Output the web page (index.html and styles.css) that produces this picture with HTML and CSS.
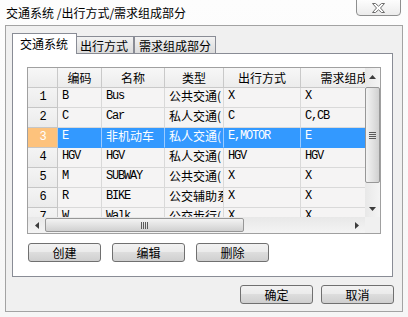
FILE: index.html
```html
<!DOCTYPE html>
<html lang="zh-CN">
<head>
<meta charset="utf-8">
<title>交通系统 /出行方式/需求组成部分</title>
<link rel="stylesheet" href="styles.css">
</head>
<body>
<div class="window">
  <div class="titlebar">
    <div class="title">交通系统 /出行方式/需求组成部分</div>
    <div class="close">
      <svg width="13" height="10" viewBox="0 0 13 10"><path d="M0.5 0.5 H3.5 L6.5 3.2 L9.5 0.5 H12.5 L8.5 5 L12.5 9.5 H9.5 L6.5 6.8 L3.5 9.5 H0.5 L4.5 5 Z" fill="#fff" stroke="#6d6d6d" stroke-width="1"/></svg>
    </div>
  </div>
  <div class="panel">
    <div class="tabs">
      <div class="tab active">交通系统</div>
      <div class="tab t2">出行方式</div>
      <div class="tab t3">需求组成部分</div>
    </div>
    <div class="page">
      <div class="grid">
        <div class="viewport">
          <div class="row head">
            <div class="cell rh"></div>
            <div class="cell c1">编码</div>
            <div class="cell c2">名称</div>
            <div class="cell c3">类型</div>
            <div class="cell c4">出行方式</div>
            <div class="cell c5">需求组成部分</div>
          </div>
          <div class="row">
            <div class="cell rh">1</div>
            <div class="cell c1">B</div>
            <div class="cell c2">Bus</div>
            <div class="cell c3 cjk">公共交通(</div>
            <div class="cell c4">X</div>
            <div class="cell c5">X</div>
          </div>
          <div class="row">
            <div class="cell rh">2</div>
            <div class="cell c1">C</div>
            <div class="cell c2">Car</div>
            <div class="cell c3 cjk">私人交通(</div>
            <div class="cell c4">C</div>
            <div class="cell c5">C,CB</div>
          </div>
          <div class="row sel">
            <div class="cell rh">3</div>
            <div class="cell c1">E</div>
            <div class="cell c2 cjk">非机动车</div>
            <div class="cell c3 cjk">私人交通(</div>
            <div class="cell c4">E,MOTOR</div>
            <div class="cell c5">E</div>
          </div>
          <div class="row">
            <div class="cell rh">4</div>
            <div class="cell c1">HGV</div>
            <div class="cell c2">HGV</div>
            <div class="cell c3 cjk">私人交通(</div>
            <div class="cell c4">HGV</div>
            <div class="cell c5">HGV</div>
          </div>
          <div class="row">
            <div class="cell rh">5</div>
            <div class="cell c1">M</div>
            <div class="cell c2">SUBWAY</div>
            <div class="cell c3 cjk">公共交通(</div>
            <div class="cell c4">X</div>
            <div class="cell c5">X</div>
          </div>
          <div class="row">
            <div class="cell rh">6</div>
            <div class="cell c1">R</div>
            <div class="cell c2">BIKE</div>
            <div class="cell c3 cjk">公交辅助系统</div>
            <div class="cell c4">X</div>
            <div class="cell c5">X</div>
          </div>
          <div class="row">
            <div class="cell rh">7</div>
            <div class="cell c1">W</div>
            <div class="cell c2">Walk</div>
            <div class="cell c3 cjk">公交步行(</div>
            <div class="cell c4">X</div>
            <div class="cell c5">X</div>
          </div>
        </div>
        <div class="vscroll">
          <div class="arrow up"><svg width="7" height="4" viewBox="0 0 7 4"><path d="M3.5 0 L7 4 H0 Z" fill="#3c3c3c"/></svg></div>
          <div class="vthumb"><span class="grip"></span></div>
          <div class="vtrack"></div>
          <div class="arrow down"><svg width="7" height="4" viewBox="0 0 7 4"><path d="M0 0 H7 L3.5 4 Z" fill="#3c3c3c"/></svg></div>
        </div>
        <div class="hscroll">
          <div class="harrow"><svg width="4" height="7" viewBox="0 0 4 7"><path d="M0 3.5 L4 0 V7 Z" fill="#3c3c3c"/></svg></div>
          <div class="hthumb"><span class="hgrip"></span></div>
          <div class="htrack"></div>
          <div class="harrow"><svg width="4" height="7" viewBox="0 0 4 7"><path d="M0 0 L4 3.5 L0 7 Z" fill="#3c3c3c"/></svg></div>
        </div>
        <div class="corner"></div>
      </div>
      <div class="actions">
        <button class="btn">创建</button>
        <button class="btn">编辑</button>
        <button class="btn">删除</button>
      </div>
    </div>
    <div class="footer">
      <button class="btn">确定</button>
      <button class="btn">取消</button>
    </div>
  </div>
</div>
</body>
</html>
```
FILE: styles.css
```css
* { box-sizing: border-box; }
html, body { margin: 0; padding: 0; }
body {
  width: 408px;
  height: 317px;
  overflow: hidden;
  background: linear-gradient(#fdfdfd, #f6f6f6);
  font-family: "Noto Sans CJK SC", sans-serif;
  font-size: 12px;
  color: #000;
}
.window { width: 408px; height: 317px; }
.titlebar {
  display: flex;
  justify-content: space-between;
  align-items: flex-start;
  height: 25px;
}
.title {
  padding: 4px 0 0 6px;
  line-height: 17px;
  font-size: 12px;
}
.close {
  width: 45px;
  height: 17px;
  margin: -1px 7px 0 0;
  border: 1px solid #8e8f8f;
  border-radius: 0 0 4px 4px;
  background: linear-gradient(#fdfdfd, #ececec);
  display: flex;
  align-items: center;
  justify-content: center;
  padding-top: 1px;
}
.close svg { display: block; }
.panel {
  margin-left: 5px;
  width: 398px;
  height: 287px;
  border: 1px solid #a3a3a3;
  background: #f0f0f0;
  padding: 7px 9px 0 6px;
  display: flex;
  flex-direction: column;
}
.tabs {
  display: flex;
  align-items: flex-end;
  height: 20px;
}
.tab {
  height: 17px;
  border: 1px solid #898c95;
  border-bottom: none;
  background: linear-gradient(#f2f2f2, #dcdcdc);
  line-height: 16px;
  font-size: 12px;
  padding: 1px 0 0 3px;
}
.tab.active {
  position: relative;
  z-index: 2;
  width: 65px;
  height: 21px;
  margin-bottom: -1px;
  background: #fff;
  padding: 2px 0 0 7px;
}
.tab.t2 { width: 58px; margin-left: -1px; }
.tab.t3 { width: 82px; padding-left: 4px; }
.page {
  width: 381px;
  height: 224px;
  border: 1px solid #898c95;
  background: #fff;
  padding: 13px 0 0 14px;
}
.grid {
  width: 354px;
  height: 167px;
  border: 1px solid #a0a0a0;
  display: grid;
  grid-template-columns: 337px 15px;
  grid-template-rows: 149px 16px;
  background: #f0f0f0;
}
.viewport {
  overflow: hidden;
  background: #f4f3f3;
}
.row {
  display: flex;
  height: 20px;
  width: 385px;
}
.cell {
  flex: none;
  height: 20px;
  border-right: 1px solid #d9d9d9;
  border-bottom: 1px solid #d9d9d9;
  overflow: hidden;
  white-space: nowrap;
  padding-left: 4px;
  font-family: "Liberation Mono", monospace;
  font-size: 12px;
  letter-spacing: -1.2px;
  line-height: 16px;
  background: #f5f4f4;
}
.cell.cjk {
  font-family: "Noto Sans CJK SC", sans-serif;
  letter-spacing: 0;
}
.rh {
  width: 30px;
  padding: 0;
  text-align: center;
  line-height: 19px;
  background: linear-gradient(#f4f4f4, #ebebeb);
  border-right: 1px solid #c6c6c6;
  border-bottom: 1px solid #c6c6c6;
}
.c1 { width: 44px; }
.c2 { width: 63px; }
.c3 { width: 59px; }
.c4 { width: 77px; }
.c5 { width: 112px; }
.row.head .cell {
  font-family: "Noto Sans CJK SC", sans-serif;
  letter-spacing: 0;
  text-align: center;
  padding: 0;
  line-height: 19px;
  background: linear-gradient(#f7f7f7, #ececec);
  border-right: 1px solid #c9c9c9;
  border-bottom: 1px solid #c9c9c9;
}
.row.sel .cell {
  background: #3399ff;
  color: #fff;
  border-right-color: #9ccbff;
  border-bottom-color: #3399ff;
}
.row.sel .rh {
  background: #fdc27c;
  color: #fff;
  border-right-color: #c6c6c6;
  border-bottom-color: #c6c6c6;
}
.vscroll {
  display: flex;
  flex-direction: column;
  background: linear-gradient(90deg, #e8e8e8, #f4f4f4);
}
.arrow {
  height: 17px;
  display: flex;
  align-items: center;
  justify-content: center;
}
.arrow svg, .harrow svg { display: block; }
.vthumb {
  margin-top: 2px;
  height: 96px;
  border: 1px solid #979797;
  border-radius: 2px;
  background: linear-gradient(90deg, #f3f3f3, #e2e2e2 50%, #d0d0d0);
  display: flex;
  align-items: center;
  justify-content: center;
}
.grip {
  width: 7px;
  height: 7px;
  background: repeating-linear-gradient(#5a5a5a 0 1px, transparent 1px 2px);
}
.vtrack { flex: 1; }
.hscroll {
  display: flex;
  background: linear-gradient(#e8e8e8, #f4f4f4);
}
.harrow {
  width: 17px;
  display: flex;
  align-items: center;
  justify-content: center;
}
.hthumb {
  width: 199px;
  margin: 1px 0;
  border: 1px solid #979797;
  border-radius: 2px;
  background: linear-gradient(#f3f3f3, #e2e2e2 50%, #d0d0d0);
  display: flex;
  align-items: center;
  justify-content: center;
}
.hgrip {
  width: 7px;
  height: 7px;
  background: repeating-linear-gradient(90deg, #5a5a5a 0 1px, transparent 1px 2px);
}
.htrack { flex: 1; }
.corner { background: #f0f0f0; }
.actions {
  display: flex;
  gap: 11px;
  margin: 9px 0 0 1px;
}
.btn {
  width: 73px;
  height: 19px;
  padding: 0;
  border: 1px solid #707070;
  border-radius: 3px;
  background: linear-gradient(#f2f2f2 0%, #ebebeb 45%, #dddddd 50%, #cfcfcf 100%);
  font-family: "Noto Sans CJK SC", sans-serif;
  font-size: 12px;
  line-height: 16px;
  color: #000;
}
.footer {
  display: flex;
  justify-content: flex-end;
  gap: 8px;
  margin: 8px -1px 0 0;
}
```
